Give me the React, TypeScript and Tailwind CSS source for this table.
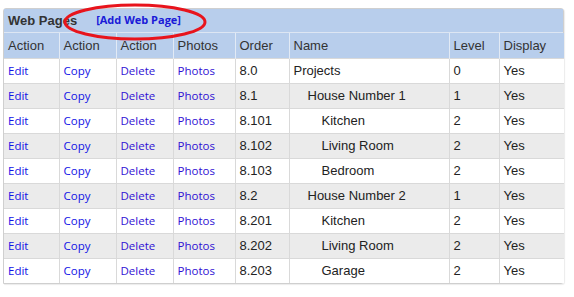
const rows = [
  { order: '8.0', name: 'Projects', level: 0 },
  { order: '8.1', name: 'House Number 1', level: 1 },
  { order: '8.101', name: 'Kitchen', level: 2 },
  { order: '8.102', name: 'Living Room', level: 2 },
  { order: '8.103', name: 'Bedroom', level: 2 },
  { order: '8.2', name: 'House Number 2', level: 1 },
  { order: '8.201', name: 'Kitchen', level: 2 },
  { order: '8.202', name: 'Living Room', level: 2 },
  { order: '8.203', name: 'Garage', level: 2 },
];

const indent = ['pl-[4px]', 'pl-[18px]', 'pl-[32px]'];

const headers = ['Action', 'Action', 'Action', 'Photos', 'Order', 'Name', 'Level', 'Display'];
const widths = ['w-[55px]', 'w-[57px]', 'w-[57px]', 'w-[62px]', 'w-[54px]', 'w-[160px]', 'w-[50px]', 'w-[65px]'];

const link = "font-['Open_Sans',sans-serif] text-[11.5px]";

export default function App() {
  return (
    <div className="w-[574px] h-[297px] bg-white pt-[8px] pl-[3px] font-['Liberation_Sans',Arial,sans-serif]">
      <div className="relative w-[561px] border border-[#cfcfcf] rounded-t-[3px] rounded-br-[3px] shadow-[1px_1px_1px_rgba(0,0,0,0.08)]">
        <div className="h-[24px] bg-[#b8ceec] flex items-center pl-[4px] gap-[19px] border-b border-[#dde6f3]">
          <span className="font-bold text-[13px] text-[#333]">Web Pages</span>
          <span className="font-bold text-[#1a1ad8] font-['Open_Sans',sans-serif] text-[11px]">[Add Web Page]</span>
        </div>
        <table className="table-fixed border-collapse w-full text-[13px] text-[#222]">
          <colgroup>
            {widths.map((w, i) => (
              <col key={i} className={w} />
            ))}
          </colgroup>
          <thead>
            <tr className="h-[25px] bg-[#b8ceec]">
              {headers.map((h, i) => (
                <th
                  key={i}
                  className="font-normal text-left px-[4px] border-l border-[#e2eaf5] first:border-l-0 text-[#333]"
                >
                  {h}
                </th>
              ))}
            </tr>
          </thead>
          <tbody>
            {rows.map((r, i) => (
              <tr key={i} className={`h-[25px] ${i % 2 === 0 ? 'bg-white' : 'bg-[#ebebeb]'} border-t border-[#d9d9d9]`}>
                <td className="px-[4px]">
                  <span className={`${link} text-[#1212e6]`}>Edit</span>
                </td>
                <td className="px-[4px] border-l border-[#d9d9d9]">
                  <span className={`${link} text-[#1212e6]`}>Copy</span>
                </td>
                <td className="px-[4px] border-l border-[#d9d9d9]">
                  <span className={`${link} text-[#3010d4]`}>Delete</span>
                </td>
                <td className="px-[4px] border-l border-[#d9d9d9]">
                  <span className={`${link} text-[#3010d4]`}>Photos</span>
                </td>
                <td className="px-[4px] border-l border-[#d9d9d9]">{r.order}</td>
                <td className={`${indent[r.level]} pr-[4px] border-l border-[#d9d9d9]`}>{r.name}</td>
                <td className="px-[4px] border-l border-[#d9d9d9]">{r.level}</td>
                <td className="px-[4px] border-l border-[#d9d9d9]">Yes</td>
              </tr>
            ))}
          </tbody>
        </table>
        <svg className="absolute left-[58px] top-[-7px] w-[146px] h-[40px] pointer-events-none" viewBox="0 0 146 40">
          <ellipse cx="73" cy="20" rx="70" ry="17" fill="none" stroke="#e8141c" strokeWidth="3" />
        </svg>
      </div>
    </div>
  );
}
